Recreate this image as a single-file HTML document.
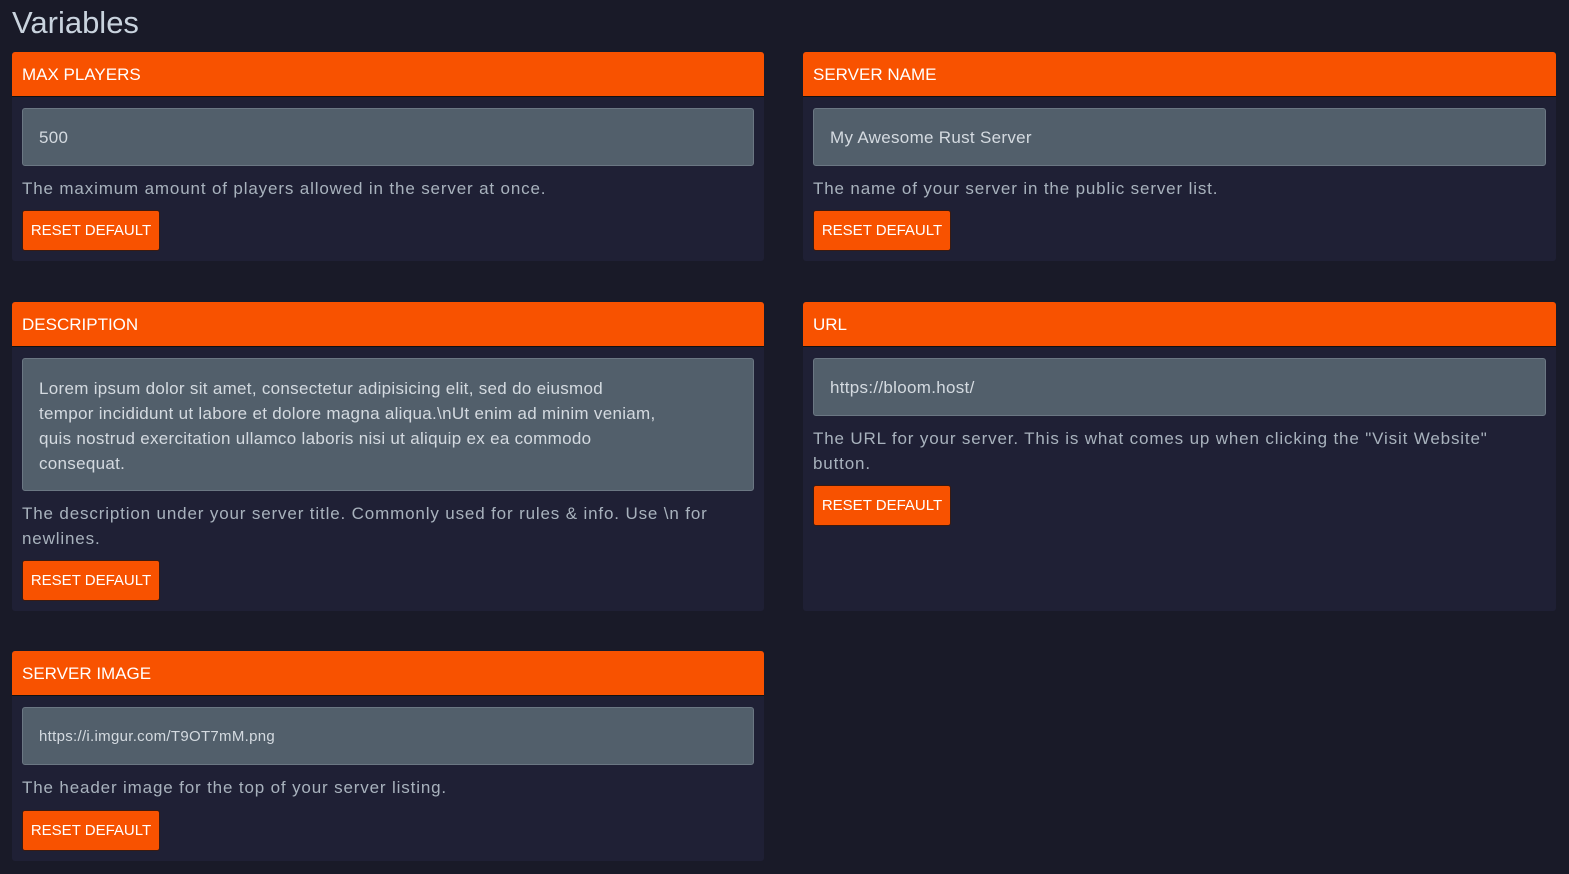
<!DOCTYPE html>
<html><head><style>
*{box-sizing:border-box;margin:0;padding:0}
body{width:1569px;height:874px;background:#191a28;font-family:"Liberation Sans",sans-serif;position:relative;overflow:hidden}
h1{position:absolute;left:12px;top:5px;font-size:31px;font-weight:normal;color:#c9d3de}
.card{position:absolute;background:#1f2035;border-radius:3px;overflow:hidden}
.hd{height:45px;background:#f85200;color:#fff;font-size:17px;padding-left:10px;line-height:45px;border-bottom:1px solid #111}
.in{position:absolute;left:10px;right:10px;top:56px;background:#525f6b;border:1px solid #6b7783;border-radius:3px;color:#d4dae0;font-size:17px;padding-left:16px;line-height:25px;white-space:nowrap;letter-spacing:0.3px}
.d{position:absolute;left:10px;right:10px;color:#a8b2bd;font-size:17px;line-height:25px;letter-spacing:0.85px;white-space:nowrap}
.b{position:absolute;left:10px;width:138px;height:41px;background:#f85200;border:1px solid #3a1a10;border-radius:3px;color:#fff;font-size:15px;text-align:center;line-height:39px}
</style></head><body>
<h1>Variables</h1>

<div class="card" style="left:12px;top:52px;width:752px;height:209px">
<div class="hd">MAX PLAYERS</div>
<div class="in" style="height:58px;line-height:57px">500</div>
<div class="d" style="top:124px">The maximum amount of players allowed in the server at once.</div>
<div class="b" style="top:158px">RESET DEFAULT</div>
</div>

<div class="card" style="left:803px;top:52px;width:753px;height:209px">
<div class="hd">SERVER NAME</div>
<div class="in" style="height:58px;line-height:57px">My Awesome Rust Server</div>
<div class="d" style="top:124px">The name of your server in the public server list.</div>
<div class="b" style="top:158px">RESET DEFAULT</div>
</div>

<div class="card" style="left:12px;top:302px;width:752px;height:309px">
<div class="hd">DESCRIPTION</div>
<div class="in" style="height:133px;padding-top:17px">Lorem ipsum dolor sit amet, consectetur adipisicing elit, sed do eiusmod<br>tempor incididunt ut labore et dolore magna aliqua.\nUt enim ad minim veniam,<br>quis nostrud exercitation ullamco laboris nisi ut aliquip ex ea commodo<br>consequat.</div>
<div class="d" style="top:199px">The description under your server title. Commonly used for rules &amp; info. Use \n for<br>newlines.</div>
<div class="b" style="top:258px">RESET DEFAULT</div>
</div>

<div class="card" style="left:803px;top:302px;width:753px;height:309px">
<div class="hd">URL</div>
<div class="in" style="height:58px;line-height:57px">https://bloom.host/</div>
<div class="d" style="top:124px">The URL for your server. This is what comes up when clicking the "Visit Website"<br>button.</div>
<div class="b" style="top:183px">RESET DEFAULT</div>
</div>

<div class="card" style="left:12px;top:651px;width:752px;height:210px">
<div class="hd">SERVER IMAGE</div>
<div class="in" style="height:58px;line-height:58px;font-size:15px">https://i.imgur.com/T9OT7mM.png</div>
<div class="d" style="top:124px">The header image for the top of your server listing.</div>
<div class="b" style="top:159px">RESET DEFAULT</div>
</div>
</body></html>
